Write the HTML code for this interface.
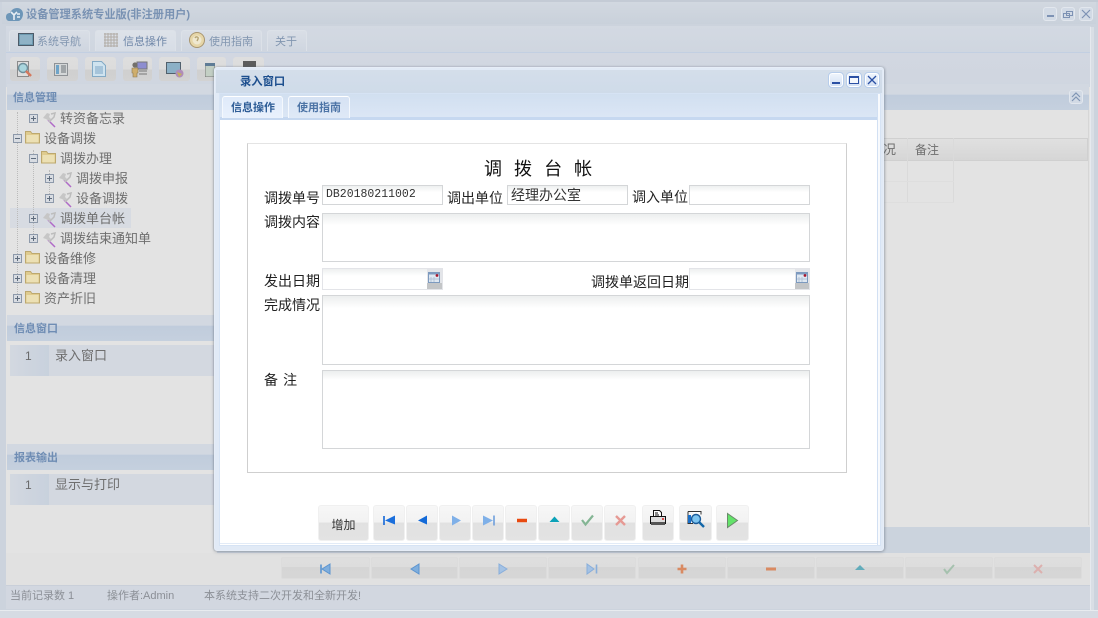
<!DOCTYPE html>
<html><head><meta charset="utf-8">
<style>
*{box-sizing:border-box}
html,body{margin:0;padding:0;width:1098px;height:618px;overflow:hidden;background:#cdd4de;font-family:"Liberation Sans","Noto Sans CJK SC",sans-serif}
.a{position:absolute}
.t{position:absolute;white-space:nowrap;line-height:16px}
.tab{position:absolute;top:30px;height:21px;background:linear-gradient(#d9dee6,#cfd6e0);border:1px solid #dce1e8;border-bottom:0;border-radius:3px 3px 0 0;font-size:11px;color:#8296b0;line-height:23px;white-space:nowrap}
.tb{position:absolute;top:57px;height:24px;border-radius:3px;background:linear-gradient(#dedede 0,#dcdcdc 52%,#cfcfcf 52%,#d2d2d2 100%)}
.tr{position:absolute;font-size:13px;color:#6e6e6e;white-space:nowrap;line-height:18px}
.pm{position:absolute;width:9px;height:9px;border:1px solid #8d99aa;background:#d8dce2}
.pm:before{content:"";position:absolute;left:1px;top:3px;width:5px;height:1px;background:#5f6c7d}
.pm.p:after{content:"";position:absolute;left:3px;top:1px;width:1px;height:5px;background:#5f6c7d}
.sh{position:absolute;height:26px;background:linear-gradient(#d2d8e1 0,#d2d8e1 40%,#c0ccdc 42%,#c5d0de 100%);font-size:11px;color:#6f8db4;font-weight:bold}
.in{position:absolute;background:linear-gradient(#eef0f0,#fff 35%);border:1px solid #d4d6d8;font-size:14px;color:#333;white-space:nowrap}
.l{position:absolute;font-size:14px;color:#222;white-space:nowrap;line-height:16px;font-family:"WenQuanYi Zen Hei","Noto Sans CJK SC",sans-serif}
.b{position:absolute;top:505px;height:36px;border-radius:3px;border:1px solid #f0f0f0;background:linear-gradient(#f7f7f7 0,#f2f2f2 48%,#e1e1e1 48%,#e3e3e3 100%)}
.b svg{position:absolute;left:0;top:0}
.n{position:absolute;top:557px;height:22px;border:1px solid #dcdcdc;border-radius:2px;background:linear-gradient(#dedede 0,#dddddd 45%,#d5d5d5 45%,#d6d6d6 100%)}
.n svg{position:absolute;left:50%;top:4px;margin-left:-7px}
.wb{position:absolute;width:14px;height:14px;border-radius:3px;border:1px solid #e2e7ee;background:#d2dae5}
.wd{position:absolute;width:14px;height:14px;border-radius:3px;border:1px solid #fff;outline:1px solid #b7cdeb;background:linear-gradient(#eef4fc,#d4e1f4)}
</style></head>
<body>
<!-- main window -->
<div class="a" style="left:0;top:0;width:1098px;height:618px;background:#ccd3dd;border-top:2px solid #c4cbd5"></div>
<div class="a" style="left:2px;top:2px;width:1094px;height:22px;background:linear-gradient(#d2d8e0,#c9d1db)"></div>
<svg class="a" style="left:5px;top:7px" width="19" height="15" viewBox="0 0 19 15"><path d="M1 10c0-3 2-4 4-4 1-3 4-5 7-5 4 0 6 3 6 6s-2 7-5 7H4c-2 0-3-2-3-4z" fill="#6d96b8"/><path d="M6 5l3 3 3-3M9 8v5M12 7h3M12 10h3" stroke="#e8eef4" stroke-width="1.6" fill="none"/></svg>
<div class="t" style="left:26px;top:7px;font-size:11.2px;font-weight:bold;color:#7992b3">设备管理系统专业版(非注册用户)</div>
<div class="wb" style="left:1043px;top:7px"><div class="a" style="left:3px;top:7px;width:7px;height:2px;background:#7d92b4"></div></div>
<div class="wb" style="left:1061px;top:7px"><svg class="a" style="left:1px;top:1px" width="10" height="10"><path d="M3.500 2.500h6v4h-6zM.5 4.500h6v4h-6z" fill="none" stroke="#7d92b4"/></svg></div>
<div class="wb" style="left:1079px;top:7px"><svg class="a" style="left:1px;top:1px" width="10" height="10"><path d="M1 1l8 8M9 1l-8 8" stroke="#7d92b4" stroke-width="1.2"/></svg></div>

<div class="a" style="left:6px;top:26px;width:1085px;height:27px;background:linear-gradient(#d3d9e2,#cfd6e0);border-bottom:1px solid #c2cfe2"></div>
<div class="tab" style="left:9px;width:81px;padding-left:27px">系统导航</div>
<div class="tab" style="left:95px;width:81px;padding-left:27px;background:linear-gradient(#dde2e9,#d7dde6);color:#6f87a8">信息操作</div>
<div class="tab" style="left:181px;width:81px;padding-left:27px">使用指南</div>
<div class="tab" style="left:267px;width:40px;padding-left:7px">关于</div>
<svg class="a" style="left:18px;top:33px" width="16" height="13"><rect x=".5" y=".5" width="15" height="12" fill="#6d9ab0" stroke="#4d5a68"/><rect x="2" y="2" width="12" height="9" fill="#8fb2c6"/></svg>
<svg class="a" style="left:104px;top:33px" width="14" height="14"><path d="M1 0v14M4 0v14M7 0v14M10 0v14M13 0v14M0 1h14M0 4h14M0 7h14M0 10h14M0 13h14" stroke="#b1aca6" stroke-width="1"/></svg>
<svg class="a" style="left:189px;top:32px" width="16" height="16"><circle cx="8" cy="8" r="7.500" fill="#e6d6a8" stroke="#a99670"/><circle cx="8" cy="8" r="4.500" fill="#efe8d0"/><path d="M6 6c1-2 4-1 3 1l-1 2" stroke="#b7a574" stroke-width="1.4" fill="none"/></svg>

<div class="a" style="left:6px;top:53px;width:1085px;height:34px;background:linear-gradient(#d2d7e1,#cfd6e0)"></div>
<div class="tb" style="left:10px;width:30px"></div>
<div class="tb" style="left:47px;width:31px"></div>
<div class="tb" style="left:85px;width:31px"></div>
<div class="tb" style="left:123px;width:29px"></div>
<div class="tb" style="left:159px;width:31px"></div>
<div class="tb" style="left:197px;width:29px"></div>
<div class="tb" style="left:233px;width:31px"></div>
<svg class="a" style="left:15px;top:60px" width="18" height="18"><path d="M2.500 1.500h11v15h-11z" fill="#dedede" stroke="#8b8b8b"/><circle cx="8" cy="8" r="4.500" fill="#a9d6de" stroke="#6e8f9b" stroke-width="1.4"/><path d="M11 11l5 5" stroke="#d4795e" stroke-width="2.6"/></svg>
<svg class="a" style="left:54px;top:63px" width="14" height="13"><rect x=".5" y=".5" width="13" height="12" fill="#d4d7d8" stroke="#8e9296"/><rect x="2" y="2" width="3" height="9" fill="#6fa4c8"/><path d="M7 3h5M7 5h5M7 7h5M7 9h5" stroke="#6d7378"/></svg>
<svg class="a" style="left:92px;top:61px" width="14" height="16"><path d="M.5.5h9l4 4v11H.5z" fill="#cfe3ef" stroke="#83aac6"/><path d="M3 6h8M3 8h8M3 10h8M3 12h8" stroke="#7ea6c4"/></svg>
<svg class="a" style="left:130px;top:61px" width="18" height="17"><rect x="7" y="1" width="10" height="7" fill="#8d8dd0" stroke="#777"/><circle cx="5" cy="4" r="2.600" fill="#73706b"/><path d="M2 7h6v5H7v4H3v-4H2z" fill="#cfae6c" stroke="#8a7a58" stroke-width=".6"/><path d="M9 10h8M9 13h8" stroke="#777"/></svg>
<svg class="a" style="left:166px;top:62px" width="18" height="16"><rect x=".5" y=".5" width="14" height="11" fill="#8bb0c6" stroke="#51606c"/><circle cx="13.500" cy="11.500" r="4" fill="#b08cb8"/><path d="M11 10l5 2-3 3z" fill="#c4b05c"/></svg>
<svg class="a" style="left:205px;top:63px" width="10" height="14"><rect width="10" height="14" fill="#c3cfc4" stroke="#777"/><rect x="0" y="0" width="10" height="3" fill="#5f7c96"/></svg>
<div class="a" style="left:243px;top:61px;width:13px;height:7px;background:#5d5d5d"></div>

<!-- left column -->
<div class="a" style="left:6px;top:87px;width:1084px;height:500px;background:#e3e3e3"></div>
<div class="a" style="left:1090px;top:27px;width:4px;height:583px;background:#d9dee5;border-left:1px solid #e6e9ee"></div>
<div class="sh" style="left:7px;top:84px;width:1082px"><span class="t" style="left:6px;top:6px">信息管理</span></div>
<div class="wb" style="left:1069px;top:90px"><svg class="a" style="left:1px;top:1px" width="10" height="10"><path d="M1 5l4-4 4 4M1 9l4-4 4 4" fill="none" stroke="#7f95b4" stroke-width="1.2"/></svg></div>

<div class="a" style="left:10px;top:208px;width:121px;height:20px;background:#d7dbe2"></div>
<div class="a" style="left:17px;top:112px;height:188px;border-left:1px dotted #bbb"></div>
<div class="a" style="left:33px;top:150px;height:88px;border-left:1px dotted #bbb"></div>
<div class="a" style="left:49px;top:170px;height:30px;border-left:1px dotted #bbb"></div>

<div class="pm p" style="left:29px;top:114px"></div><div class="tr" style="left:60px;top:110px">转资备忘录</div>
<div class="pm" style="left:13px;top:134px"></div><div class="tr" style="left:44px;top:130px">设备调拨</div>
<div class="pm" style="left:29px;top:154px"></div><div class="tr" style="left:60px;top:150px">调拨办理</div>
<div class="pm p" style="left:45px;top:174px"></div><div class="tr" style="left:76px;top:170px">调拨申报</div>
<div class="pm p" style="left:45px;top:194px"></div><div class="tr" style="left:76px;top:190px">设备调拨</div>
<div class="pm p" style="left:29px;top:214px"></div><div class="tr" style="left:60px;top:210px">调拨单台帐</div>
<div class="pm p" style="left:29px;top:234px"></div><div class="tr" style="left:60px;top:230px">调拨结束通知单</div>
<div class="pm p" style="left:13px;top:254px"></div><div class="tr" style="left:44px;top:250px">设备维修</div>
<div class="pm p" style="left:13px;top:274px"></div><div class="tr" style="left:44px;top:270px">设备清理</div>
<div class="pm p" style="left:13px;top:294px"></div><div class="tr" style="left:44px;top:290px">资产折旧</div>

<svg width="0" height="0" style="position:absolute"><defs>
<g id="f"><path d="M.5 13V1.500h5l1.500 2h7.500V13z" fill="#dfcb8e" stroke="#bda86e"/><rect x="1.500" y="5" width="12" height="7.500" fill="#ece0b4"/></g>
<g id="w"><path d="M6 8l7 7" stroke="#b06ac8" stroke-width="1.500"/><path d="M1 6l4-5 3 1-1 3 2 2-2 2-3-2z" fill="#c6c6c6"/><path d="M9 2l4-1-1 4-5 5" stroke="#bdbdbd" stroke-width="1.500" fill="none"/></g>
</defs></svg>
<svg class="a" style="left:25px;top:130px" width="15" height="14"><use href="#f"/></svg>
<svg class="a" style="left:41px;top:150px" width="15" height="14"><use href="#f"/></svg>
<svg class="a" style="left:25px;top:250px" width="15" height="14"><use href="#f"/></svg>
<svg class="a" style="left:25px;top:270px" width="15" height="14"><use href="#f"/></svg>
<svg class="a" style="left:25px;top:290px" width="15" height="14"><use href="#f"/></svg>
<svg class="a" style="left:42px;top:112px" width="15" height="16"><use href="#w"/></svg>
<svg class="a" style="left:58px;top:172px" width="15" height="16"><use href="#w"/></svg>
<svg class="a" style="left:58px;top:192px" width="15" height="16"><use href="#w"/></svg>
<svg class="a" style="left:42px;top:212px" width="15" height="16"><use href="#w"/></svg>
<svg class="a" style="left:42px;top:232px" width="15" height="16"><use href="#w"/></svg>

<div class="sh" style="left:7px;top:315px;width:210px"><span class="t" style="left:7px;top:6px">信息窗口</span></div>
<div class="a" style="left:10px;top:345px;width:205px;height:31px;background:#d3d8e0"></div>
<div class="a" style="left:10px;top:345px;width:39px;height:31px;background:linear-gradient(90deg,#d3d8e0,#c8d1dd)"></div>
<div class="t" style="left:25px;top:348px;font-size:12px;color:#6a6a6a">1</div>
<div class="tr" style="left:55px;top:347px">录入窗口</div>

<div class="sh" style="left:7px;top:444px;width:210px"><span class="t" style="left:7px;top:6px">报表输出</span></div>
<div class="a" style="left:10px;top:474px;width:205px;height:31px;background:#d3d8e0"></div>
<div class="a" style="left:10px;top:474px;width:39px;height:31px;background:linear-gradient(90deg,#d3d8e0,#c8d1dd)"></div>
<div class="t" style="left:25px;top:477px;font-size:12px;color:#6a6a6a">1</div>
<div class="tr" style="left:55px;top:476px">显示与打印</div>

<!-- right table -->
<div class="a" style="left:883px;top:138px;width:205px;height:23px;background:linear-gradient(#e0e0e0,#d6d6d6);border:1px solid #d0d0d0;border-left:0"></div>
<div class="a" style="left:907px;top:138px;width:1px;height:65px;background:#dadada"></div>
<div class="a" style="left:953px;top:138px;width:1px;height:65px;background:#dadada"></div>
<div class="a" style="left:883px;top:181px;width:71px;height:1px;background:#dedede"></div>
<div class="a" style="left:883px;top:202px;width:71px;height:1px;background:#dedede"></div>
<div class="tr" style="left:883px;top:141px">况</div>
<div class="tr" style="left:915px;top:141px;font-size:12px">备注</div>
<div class="a" style="left:1088px;top:110px;width:1px;height:415px;background:#d6d6d6"></div>

<div class="a" style="left:217px;top:527px;width:873px;height:26px;background:#cbd3dd"></div>
<div class="a" style="left:6px;top:553px;width:1084px;height:32px;background:#e1e1e1"></div>
<div class="n" style="left:281px;width:89px"><svg width="14" height="14"><path d="M2 2.500v9" stroke="#5b94d0" stroke-width="1.600"/><path d="M3 7l8-5v10z" fill="#7faedd" stroke="#5b94d0"/></svg></div>
<div class="n" style="left:371px;width:87px"><svg width="14" height="14"><path d="M3 7l8-5v10z" fill="#7faedd" stroke="#5b94d0"/></svg></div>
<div class="n" style="left:459px;width:88px"><svg width="14" height="14"><path d="M11 7L3 2v10z" fill="#a4c2e4" stroke="#88aedb"/></svg></div>
<div class="n" style="left:548px;width:88px"><svg width="14" height="14"><path d="M9 7L2 2v10z" fill="#a4c2e4" stroke="#88aedb"/><path d="M11.500 2.500v9" stroke="#88aedb" stroke-width="1.600"/></svg></div>
<div class="n" style="left:638px;width:88px"><svg width="14" height="14"><path d="M7 2.500v9M2.500 7h9" stroke="#d98a62" stroke-width="2.600"/></svg></div>
<div class="n" style="left:727px;width:88px"><svg width="14" height="14"><path d="M2 7h10" stroke="#d98a62" stroke-width="3"/></svg></div>
<div class="n" style="left:816px;width:88px"><svg width="14" height="14"><path d="M7 3l5 5H2z" fill="#62acbb"/></svg></div>
<div class="n" style="left:905px;width:88px"><svg width="14" height="14"><path d="M2 7l3 4 7-8" fill="none" stroke="#a5c1ae" stroke-width="2"/></svg></div>
<div class="n" style="left:994px;width:88px"><svg width="14" height="14"><path d="M3 3l8 8M11 3l-8 8" stroke="#dcb0ae" stroke-width="2"/></svg></div>

<div class="a" style="left:6px;top:585px;width:1084px;height:24px;background:#d2d7e0;border-top:1px solid #c9cfd9"></div>
<div class="t" style="left:10px;top:588px;font-size:11px;color:#8b8f96">当前记录数 1</div>
<div class="t" style="left:107px;top:588px;font-size:11px;color:#8b8f96">操作者:Admin</div>
<div class="t" style="left:204px;top:588px;font-size:11px;color:#8b8f96">本系统支持二次开发和全新开发!</div>
<div class="a" style="left:0;top:610px;width:1098px;height:8px;background:#d6dbe3;border-top:1px solid #e8ebef"></div>

<!-- dialog -->
<div class="a" style="left:214px;top:67px;width:670px;height:484px;border-radius:3px;background:#e1eaf6;border:1px solid #e6edf7;box-shadow:0 1px 3px rgba(90,100,115,.4),-1px 0 1px rgba(90,100,115,.18),1px 0 2px rgba(90,100,115,.28)"></div>
<div class="a" style="left:216px;top:70px;width:666px;height:23px;background:linear-gradient(#d4deea,#cfdbe9)"></div>
<div class="t" style="left:240px;top:74px;font-size:11.300px;font-weight:bold;color:#1d4f8e">录入窗口</div>
<div class="wd" style="left:829px;top:73px"><div class="a" style="left:2px;top:8px;width:8px;height:2px;background:#2b50a4"></div></div>
<div class="wd" style="left:847px;top:73px"><div class="a" style="left:1px;top:2px;width:10px;height:8px;border:1px solid #2b50a4;border-top-width:2px;background:#f4f7fc"></div></div>
<div class="wd" style="left:865px;top:73px"><svg class="a" style="left:1px;top:1px" width="10" height="10"><path d="M1 1l8 8M9 1l-8 8" stroke="#2b50a4" stroke-width="1.300"/></svg></div>

<div class="a" style="left:219px;top:93px;width:662px;height:453px;background:#fff;border:1px solid #d6e3f4"></div>
<div class="a" style="left:877px;top:94px;width:3px;height:451px;background:#f8fafd;border-left:1px solid #d2e0f3"></div>
<div class="a" style="left:220px;top:94px;width:657px;height:26px;background:linear-gradient(#d1dff0,#dbe6f5);border-bottom:3px solid #c6d8f0"></div>
<div class="a" style="left:222px;top:96px;width:61px;height:22px;border-top:1px solid #fff;border-left:1px solid #f4f8fd;border-right:1px solid #f4f8fd;border-radius:3px 3px 0 0;background:linear-gradient(#dfeafa,#e9f1fc);font-size:11px;font-weight:bold;color:#2d5c96;line-height:22px;padding-left:8px;white-space:nowrap">信息操作</div>
<div class="a" style="left:288px;top:96px;width:62px;height:22px;border-top:1px solid #fff;border-left:1px solid #f4f8fd;border-right:1px solid #f4f8fd;border-radius:3px 3px 0 0;background:linear-gradient(#d6e2f3,#dfe9f7);font-size:11px;font-weight:bold;color:#4d74a6;line-height:22px;padding-left:8px;white-space:nowrap">使用指南</div>
<div class="a" style="left:220px;top:543px;width:657px;height:1px;background:#e2ebf7"></div>

<!-- form -->
<div class="a" style="left:247px;top:143px;width:600px;height:330px;border:1px solid #cfcfcf;border-top-color:#e4e4e4"></div>
<div class="l" style="left:484px;top:158px;font-size:18px;line-height:20px;letter-spacing:4px;color:#111">调 拨 台 帐</div>
<div class="l" style="left:264px;top:190px">调拨单号</div>
<div class="in" style="left:322px;top:185px;width:121px;height:20px;padding-left:3px;font-family:'Liberation Mono',monospace;font-size:11.500px;line-height:18px">DB20180211002</div>
<div class="l" style="left:447px;top:190px">调出单位</div>
<div class="in" style="left:507px;top:185px;width:121px;height:20px;padding-left:3px;line-height:18px;font-family:'WenQuanYi Zen Hei','Noto Sans CJK SC',sans-serif">经理办公室</div>
<div class="l" style="left:632px;top:189px">调入单位</div>
<div class="in" style="left:689px;top:185px;width:121px;height:20px"></div>
<div class="l" style="left:264px;top:214px">调拨内容</div>
<div class="in" style="left:322px;top:213px;width:488px;height:49px;background:linear-gradient(#eceeee,#fff 24%)"></div>
<div class="l" style="left:264px;top:273px">发出日期</div>
<div class="in" style="left:322px;top:268px;width:121px;height:22px;border-color:#e3e4e8"></div>
<div class="l" style="left:591px;top:274px">调拨单返回日期</div>
<div class="in" style="left:689px;top:268px;width:121px;height:22px;border-color:#e3e4e8"></div>
<div class="a" style="left:427px;top:269px;width:15px;height:20px;background:linear-gradient(#e3e5e9 0,#e3e5e9 70%,#c3c5c7 70%)"></div>
<div class="a" style="left:795px;top:269px;width:14px;height:20px;background:linear-gradient(#e3e5e9 0,#e3e5e9 70%,#c3c5c7 70%)"></div>
<svg class="a" style="left:428px;top:272px" width="12" height="12"><rect x=".5" y=".5" width="11" height="10" fill="#dfe8f2" stroke="#7d9abf"/><rect x="1" y="1" width="10" height="1.500" fill="#7d9abf"/><circle cx="9" cy="3.500" r="1.400" fill="#a8152b"/><path d="M3 5v5M6 5v5M1 7h10" stroke="#b3c3d8"/></svg>
<svg class="a" style="left:796px;top:272px" width="12" height="12"><rect x=".5" y=".5" width="11" height="10" fill="#dfe8f2" stroke="#7d9abf"/><rect x="1" y="1" width="10" height="1.500" fill="#7d9abf"/><circle cx="9" cy="3.500" r="1.400" fill="#a8152b"/><path d="M3 5v5M6 5v5M1 7h10" stroke="#b3c3d8"/></svg>
<div class="l" style="left:264px;top:297px">完成情况</div>
<div class="in" style="left:322px;top:295px;width:488px;height:70px;background:linear-gradient(#eceeee,#fff 18%)"></div>
<div class="l" style="left:264px;top:372px;letter-spacing:1px">备 注</div>
<div class="in" style="left:322px;top:370px;width:488px;height:79px;background:linear-gradient(#eceeee,#fff 12%)"></div>

<!-- form buttons -->
<div class="b" style="left:318px;width:51px;font-size:12px;color:#333;text-align:center;line-height:38px">增加</div>
<div class="b" style="left:373px;width:32px"><svg width="30" height="34"><path d="M10 10v9" stroke="#1166d8" stroke-width="1.600"/><path d="M11 14.500l10-5v9z" fill="#1b6fdc"/></svg></div>
<div class="b" style="left:406px;width:32px"><svg width="30" height="34"><path d="M11 14.500l9-5v9z" fill="#136ad8"/></svg></div>
<div class="b" style="left:439px;width:32px"><svg width="30" height="34"><path d="M21 14.500l-9-5v10z" fill="#7fb0e8"/></svg></div>
<div class="b" style="left:472px;width:32px"><svg width="30" height="34"><path d="M20 14.500l-10-5v10z" fill="#7fb0e8"/><path d="M21 9.500v10" stroke="#6f9fdc" stroke-width="1.600"/></svg></div>
<div class="b" style="left:505px;width:32px"><svg width="30" height="34"><path d="M11 14.500h10" stroke="#e84a10" stroke-width="3.500"/></svg></div>
<div class="b" style="left:538px;width:32px"><svg width="30" height="34"><path d="M15.500 10.500l5 5.500h-10z" fill="#0ca2b8"/></svg></div>
<div class="b" style="left:571px;width:32px"><svg width="30" height="34"><path d="M10 14l3.500 4.500L21 9.500" fill="none" stroke="#84b594" stroke-width="2.200"/></svg></div>
<div class="b" style="left:604px;width:32px"><svg width="30" height="34"><path d="M11 10l9 9M20 10l-9 9" stroke="#e69a94" stroke-width="2.400"/></svg></div>
<div class="b" style="left:642px;width:32px"><svg width="30" height="34"><path d="M10.500 4.500h6l2 2v5h-8z" fill="#fff" stroke="#111"/><path d="M12 7h3M12 9h4" stroke="#111"/><rect x="7.500" y="10.500" width="15" height="7" fill="#ddd" stroke="#111"/><rect x="8" y="16" width="14" height="3" fill="#555"/><circle cx="20" cy="13" r="1" fill="#d22"/></svg></div>
<div class="b" style="left:679px;width:33px"><svg width="31" height="34"><path d="M8 5.500h13v3M8 5.500v12h5" fill="#fff" stroke="#333"/><rect x="8" y="9" width="3" height="8" fill="#1a6fc8"/><circle cx="16" cy="13" r="4.500" fill="#7cc4f0" stroke="#1a5a98" stroke-width="1.400"/><path d="M19 16l5 5" stroke="#1266a8" stroke-width="2.400"/></svg></div>
<div class="b" style="left:716px;width:33px"><svg width="31" height="34"><path d="M10.500 7.500l10 7-10 7z" fill="#63e36a" stroke="#6a8a6a"/></svg></div>
</body></html>
